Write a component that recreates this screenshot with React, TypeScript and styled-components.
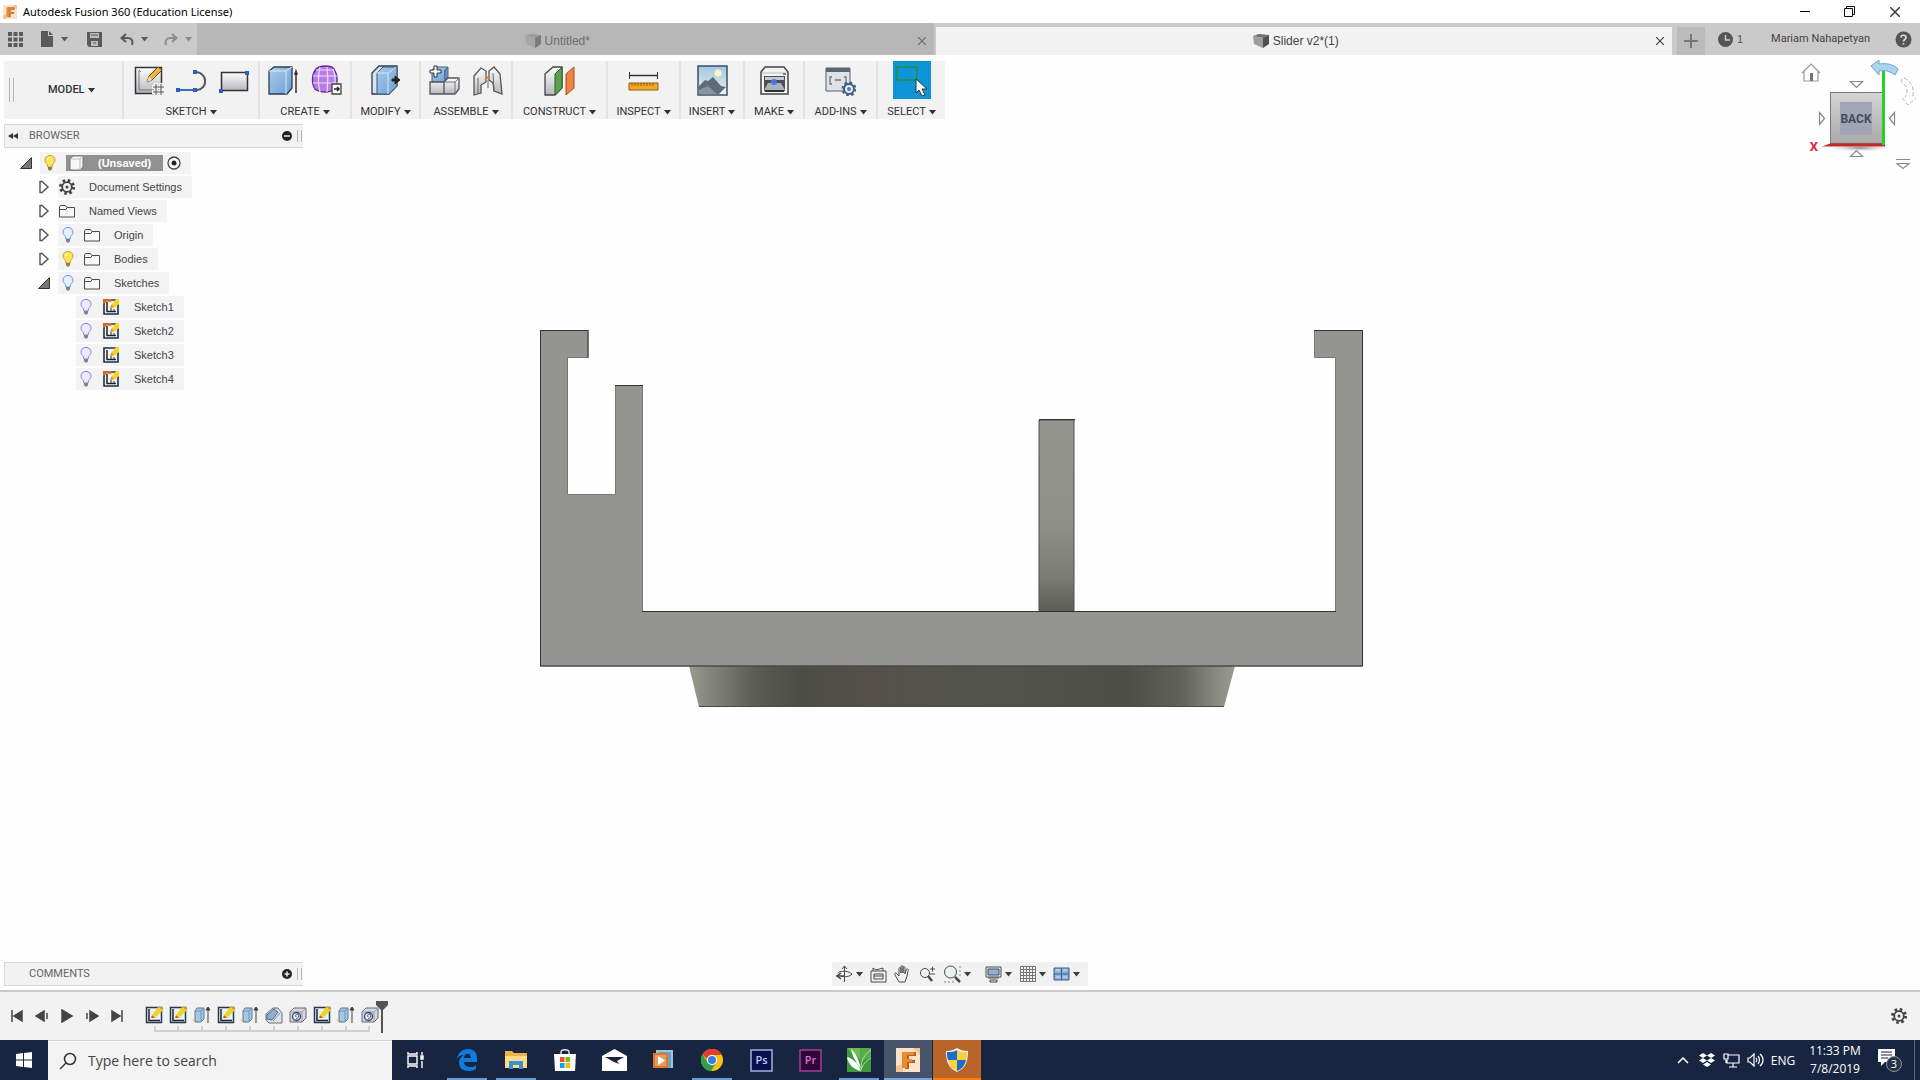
import React from 'react';
import styled, { createGlobalStyle } from 'styled-components';

const GlobalStyle = createGlobalStyle`
  *, *::before, *::after { box-sizing: border-box; }
  body { margin: 0; background: #fff; font-family: "Liberation Sans", Arial, sans-serif; font-size: 11px; color: #3c3c3c; }
  button { border: 0; padding: 0; background: none; font: inherit; color: inherit; }
  svg { display: block; flex: none; }
`;

/* ---------- layout ---------- */

const Window = styled.div`
  display: flex;
  flex-direction: column;
  min-height: 100vh;
`;

const TitleBar = styled.header`
  display: flex;
  align-items: center;
  height: 23px;
  padding: 0 3px;
  background: #fff;
`;

const AppTitle = styled.h1`
  flex: 1;
  margin: 0 0 0 6px;
  font: 400 11px/23px "Noto Sans", "Segoe UI", sans-serif;
  color: #000;
`;

const WindowButton = styled.button`
  display: grid;
  place-items: center;
  width: 45px;
  height: 22px;
`;

const TabBar = styled.div`
  display: flex;
  align-items: stretch;
  height: 32px;
  background: #cacaca;
  color: #555;
`;

const QuickAccess = styled.div`
  display: flex;
  align-items: center;
  width: 197px;
  padding-left: 8px;
  gap: 16px;
`;

const QuickButton = styled.button<{ $w: number; $dim?: boolean; $center?: boolean }>`
  display: flex;
  align-items: center;
  justify-content: ${p => (p.$center ? 'center' : 'space-between')};
  width: ${p => p.$w}px;
  height: 20px;
  color: ${p => (p.$dim ? '#8c8c8c' : '#5a5a5a')};
`;

const Tab = styled.div<{ $active?: boolean }>`
  display: flex;
  flex: 1;
  align-items: center;
  margin-top: ${p => (p.$active ? 4 : 0)}px;
  padding: ${p => (p.$active ? 0 : 4)}px 4px 0 4px;
  border-right: 2px solid #cacaca;
  background: ${p => (p.$active ? '#f2f2f2' : '#b7b7b7')};
  color: ${p => (p.$active ? '#444' : '#6c6c6c')};
`;

const TabName = styled.button`
  display: flex;
  flex: 1;
  align-items: center;
  justify-content: center;
  gap: 4px;
  font-size: 12px;
  line-height: 20px;
`;

const TabClose = styled.button`
  display: grid;
  place-items: center;
  width: 16px;
  height: 20px;
`;

const Account = styled.div`
  display: flex;
  align-items: center;
  width: 246px;
  padding: 0 8px 0 3px;
`;

const NewTab = styled.button`
  display: grid;
  place-items: center;
  align-self: stretch;
  width: 28px;
  margin: 4px 13px 0 0;
  background: #bbb;
`;

const JobCount = styled.button`
  display: flex;
  align-items: center;
  gap: 4px;
`;

const UserName = styled.button`
  flex: 1;
  padding-left: 4px;
  font: 400 11px/20px Roboto, sans-serif;
  color: #444;
`;

const Workspace = styled.main`
  position: relative;
  display: flex;
  flex: 1;
  flex-direction: column;
  align-items: flex-start;
  padding: 6px 4px 4px;
  background: #fefefe;
  border-bottom: 2px solid #c9c9c9;
`;

const Stage = styled.div`
  position: absolute;
  inset: 0;
  display: grid;
  place-items: center;
  padding: 0 16px 8px 0;
`;

const CubeHolder = styled.div`
  position: absolute;
  top: 1px;
  right: 0;
`;

const Ribbon = styled.div`
  position: relative;
  display: flex;
  height: 58px;
  margin-bottom: 5px;
  background: #f2f2f2;
`;

const Group = styled.section<{ $w: number }>`
  display: flex;
  flex-direction: column;
  align-items: center;
  width: ${p => p.$w}px;
  gap: 6px;
  border-left: 2px solid #e2e2e2;
`;

const ToolRow = styled.div`
  display: flex;
  align-items: center;
  height: 38px;
  gap: 12px;
`;

const Tool = styled.button<{ $on?: boolean }>`
  display: grid;
  place-items: center;
  width: ${p => (p.$on ? 38 : 31)}px;
  height: 38px;
  background: ${p => (p.$on ? '#0c96d8' : 'transparent')};
`;

const MenuButton = styled.button<{ $strong?: boolean }>`
  display: flex;
  align-items: center;
  gap: 3px;
  font: ${p => (p.$strong ? 500 : 400)} 11px/14px Roboto, sans-serif;
  color: #333;
`;

const Mode = styled.div`
  display: flex;
  align-items: center;
  width: 118px;
  gap: 34px;
  padding-left: 5px;
`;

const Grip = styled.span<{ $h: number }>`
  width: 5px;
  height: ${p => p.$h}px;
  border: solid #b4b4b4;
  border-width: 0 1px;
`;

const PanelBar = styled.div`
  position: relative;
  display: flex;
  align-items: center;
  width: 299px;
  height: 24px;
  padding: 0 1px;
  gap: 3px;
  background: #f2f2f2;
  border: solid #d6d6d6;
  border-width: 1px 0 1px 1px;
`;

const PanelTitle = styled.h2`
  flex: 1;
  margin: 0;
  padding-left: 6px;
  font: 400 11px/20px Roboto, sans-serif;
  color: #666;
`;

const IconSlot = styled.button<{ $w?: number }>`
  display: grid;
  place-items: center;
  width: ${p => p.$w ?? 14}px;
  height: 20px;
`;

const Tree = styled.ul`
  position: relative;
  margin: 3px 0 0;
  padding: 0;
  list-style: none;
`;

const TreeRow = styled.li<{ $indent: number }>`
  display: flex;
  align-items: center;
  height: 24px;
  gap: 8px;
  padding-left: ${p => p.$indent}px;
`;

const Pill = styled.div<{ $gap: number }>`
  display: flex;
  align-items: center;
  height: 22px;
  gap: ${p => p.$gap}px;
  padding: 0 10px 0 1px;
  background: #f3f3f3;
`;

const NodeName = styled.button`
  margin-left: 7px;
  font-size: 11px;
  line-height: 22px;
  color: #444;
`;

const RootName = styled.button`
  display: flex;
  align-items: center;
  width: 97px;
  height: 16px;
  margin: 0 1px 0 4px;
  padding-left: 3px;
  gap: 14px;
  background: #919191;
  color: #fff;
  font-size: 11px;
  font-weight: 700;
`;

const Bottom = styled.div`
  position: relative;
  display: grid;
  grid-template-columns: 1fr auto 1fr;
  width: 100%;
  margin-top: auto;
`;

const NavBar = styled.div`
  display: flex;
  align-items: center;
  gap: 7px;
  height: 24px;
  padding: 0 8px 0 4px;
  background: #f1f1f1;
`;

const NavButton = styled.button<{ $apart?: boolean }>`
  display: flex;
  align-items: center;
  gap: 3px;
  height: 22px;
  margin-left: ${p => (p.$apart ? 7 : 0)}px;
`;

const Timeline = styled.section`
  display: flex;
  align-items: center;
  height: 48px;
  padding: 0 12px 0 4px;
  background: #f2f2f2;
`;

const Playback = styled.div`
  display: flex;
  width: 138px;
`;

const History = styled.div`
  display: flex;
  flex: 1;
  align-items: flex-start;
  height: 31px;
  margin-top: 1px;
`;

const Features = styled.ol`
  display: flex;
  margin: 0;
  padding: 0;
  list-style: none;
`;

const Feature = styled.li`
  display: flex;
  flex-direction: column;
  align-items: center;
  width: 24px;
  padding-top: 5px;
  gap: 2px;
`;

const Track = styled.span<{ $edge?: 'first' | 'last' }>`
  width: ${p => (p.$edge ? 12 : 24)}px;
  height: 6px;
  align-self: ${p => (p.$edge === 'first' ? 'flex-end' : 'flex-start')};
  border-bottom: 2px solid #cfcfcf;
  background: linear-gradient(#cfcfcf, #cfcfcf) no-repeat
    ${p => (p.$edge === 'first' ? 'left' : p.$edge === 'last' ? 'right' : 'center')} / 2px 100%;
`;

const Marker = styled.span`
  display: block;
  margin-left: -6px;
`;

const TaskBar = styled.footer`
  display: flex;
  align-items: center;
  height: 40px;
  background: #182540;
  color: #fff;
  font-family: "Open Sans", "Segoe UI", sans-serif;
`;

const TaskButton = styled.button<{ $tone?: string; $line?: string; $wide?: boolean }>`
  display: grid;
  place-items: center;
  width: 48px;
  height: 40px;
  margin-right: ${p => (p.$wide ? 3 : 1)}px;
  background: ${p => p.$tone ?? 'transparent'};
  background-image: ${p => (p.$line ? `linear-gradient(${p.$line}, ${p.$line})` : 'none')};
  background-repeat: no-repeat;
  background-position: bottom center;
  background-size: ${p => (p.$tone ? 48 : 40)}px 2px;
`;

const Start = styled.button`
  display: grid;
  place-items: center;
  width: 48px;
  height: 40px;
`;

const Search = styled.label`
  display: flex;
  align-items: center;
  width: 344px;
  height: 40px;
  gap: 11px;
  padding: 0 11px;
  background: #f3f3f3;
  border-top: 1px solid #d2d2d2;
`;

const SearchInput = styled.input`
  flex: 1;
  min-width: 0;
  border: 0;
  padding: 0;
  outline: 0;
  background: none;
  font: 400 14px/20px "Open Sans", "Segoe UI", sans-serif;
  &::placeholder { color: #444; opacity: 1; }
`;

const Tray = styled.div`
  display: flex;
  align-items: center;
  margin-left: auto;
  font-size: 12px;
`;

const TrayButton = styled.button`
  display: grid;
  place-items: center;
  width: 24px;
  height: 40px;
`;

const Language = styled.button`
  width: 32px;
`;

const Clock = styled.time`
  width: 72px;
  margin-right: 6px;
  text-align: center;
  line-height: 18px;
  white-space: pre-line;
`;

const Peek = styled.span`
  width: 6px;
  height: 40px;
  margin-left: 13px;
  border-left: 1px solid #5b667b;
`;

/* ---------- small glyphs ---------- */

const Caret = () => (
  <svg width="7" height="5" viewBox="0 0 7 5" fill="currentColor"><path d="M0 0h7L3.500 4.500z" /></svg>
);

const Cross = ({ size = 8 }: { size?: number }) => (
  <svg width={size} height={size} viewBox="0 0 10 10" fill="none" stroke="currentColor" strokeWidth="1.500"><path d="M0 0l10 10M10 0L0 10" /></svg>
);

const FusionMark = ({ size }: { size: number }) => (
  <svg width={size} height={size} viewBox="0 0 24 24">
    <path fill="#fbe3cb" d="M0 0h24v24H0z" />
    <path fill="#f4c394" d="M0 18l7-2v8H0zM17 0h7v7z" />
    <path fill="#b5651d" d="M9 4h11v4h-7v4h6v3h-6v6H9z" />
    <path fill="#e88b32" d="M6 4h12v3h-7v4h5v3h-5v6H6z" />
  </svg>
);

const Cube = ({ dim }: { dim?: boolean }) => (
  <svg width="16" height="16" viewBox="0 0 16 16">
    <path fill={dim ? '#9a9a9a' : '#6f6f6f'} d="M0 3l6-2 10 1-6 3z" />
    <path fill={dim ? '#a6a6a6' : '#9d9d9d'} d="M0 3l10 2v10L1 11z" />
    <path fill={dim ? '#7b7b7b' : '#505050'} d="M10 5l6-3v9l-6 4z" />
  </svg>
);

const Gear = () => (
  <svg width="16" height="16" viewBox="0 0 16 16" fill="none" stroke="#444">
    <circle cx="8" cy="8" r="6.500" strokeWidth="3" strokeDasharray="2.500 2.600" />
    <circle cx="8" cy="8" r="4.800" strokeWidth="1.800" />
    <circle cx="8" cy="8" r="1.500" fill="#444" stroke="none" />
  </svg>
);

const Bulb = ({ on, violet }: { on?: boolean; violet?: boolean }) => (
  <svg width="18" height="16" viewBox="0 0 18 16">
    <path d="M9 .5C6 .5 4 2.500 4 5.200c0 2 1.500 3 2.300 4.300.4.700.4 1.500.4 2.500h4.600c0-1 0-1.800.4-2.500C12.500 8.200 14 7.200 14 5.200 14 2.500 12 .5 9 .5z" fill={on ? '#f9e45c' : violet ? '#eceaff' : '#e3f0fc'} stroke={on ? '#c9a51d' : violet ? '#8584cb' : '#6f9cc8'} />
    <path d="M7 12h4v2l-1 1.500H8L7 14z" fill={on ? '#8a7a52' : '#77819a'} />
    <path d="M6.500 4.500c0-1 1-2 2-2" stroke="#fff" fill="none" />
  </svg>
);

const Folder = () => (
  <svg width="16" height="14" viewBox="0 0 16 14" fill="none" stroke="#4a4a4a">
    <path d="M.5 13V3l1-1.500h5L8 3.500h7.500V13z" fill="#f7f7f7" /><path d="M.5 5.500H7l1-2" />
  </svg>
);

const Expander = ({ open }: { open?: boolean }) => open ? (
  <svg width="12" height="12" viewBox="0 0 12 12"><path d="M11.500.5v11H.5z" fill="#777" stroke="#333" /></svg>
) : (
  <svg width="12" height="14" viewBox="0 0 12 14"><path d="M2 1.500v11h2l6-5.500-6-5.500z" fill="#fff" stroke="#555" strokeWidth="1.400" /></svg>
);

const SketchNode = ({ red = true }: { red?: boolean }) => (
  <svg width="16" height="16" viewBox="0 0 16 16">
    <path d="M1 1h14v14H1z" fill="#f4f6fa" stroke="#1c2c48" strokeWidth="1.600" />
    <path d="M4 3v9.500h9" fill="none" stroke="#222" strokeWidth="1.500" />
    <path d="M7 9l2-4 4-5h3v5l-5 4z" fill="#f6d22c" />
    <path d="M7 9l1.500-3.500L10.500 8z" fill="#c98b4a" />
    {red && <path d="M0 0h10L8 3 4 2.500 0 5z" fill="#cf6a2e" />}
    <path d="M8 9v3M11 10v2" stroke="#333" />
  </svg>
);

const SketchFeature = () => (
  <svg width="18" height="18" viewBox="0 0 18 18">
    <path d="M1.500 1.500h15v15h-15z" fill="#e8f1f8" stroke="#26364d" strokeWidth="1.500" />
    <path d="M4 3v11.500h11" fill="none" stroke="#222" strokeWidth="1.500" />
    <path d="M7 9l6-8h5v3l-8 8z" fill="#f6d22c" /><path d="M6 12l1-3 3 3z" fill="#a9682c" /><path d="M13 1h5v3z" fill="#c9922a" />
  </svg>
);

const ExtrudeFeature = () => (
  <svg width="18" height="18" viewBox="0 0 18 18">
    <path d="M2 5l2-3h7v11l-3 3H2z" fill="#a5c6e6" stroke="#5e7692" /><path d="M2 5h6v11M8 5l3-3" fill="none" stroke="#7593b3" />
    <path d="M15 17V3M13 4l2-3 2 3z" fill="#333" stroke="#444" />
    <circle cx="1" cy="14" r="1" fill="#eeb243" />
  </svg>
);

const FilletFeature = () => (
  <svg width="18" height="18" viewBox="0 0 18 18">
    <path d="M1 8l7-6h5l4 5v10H4l-3-3z" fill="#dde2e7" stroke="#66717d" /><path d="M2 9l7-6 4 3-6 8-5-1z" fill="#93b0ce" stroke="#4e6887" /><path d="M8 15l7-8" stroke="#7d8b9a" />
  </svg>
);

const HoleFeature = () => (
  <svg width="18" height="18" viewBox="0 0 18 18">
    <path d="M1 6l4-4h12v10l-4 4H1z" fill="#d3d9de" stroke="#667" /><path d="M13 16V6l4-4M13 6H1" fill="none" stroke="#99a" />
    <circle cx="7.500" cy="10.500" r="4" fill="#eef3f9" stroke="#3b4c66" strokeWidth="1.400" /><path d="M7 13c3-1 3-3 2-5-2 0-3 1-2 3" fill="none" stroke="#3b4c66" />
  </svg>
);

/* ---------- ribbon icons ---------- */

const Big = ({ children, label }: { children: React.ReactNode; label: string }) => (
  <svg width="31" height="31" viewBox="0 0 31 31" aria-label={label} role="img">{children}</svg>
);

const HiddenSvg = styled.svg`
  position: absolute;
`;

const Defs = () => (
  <HiddenSvg width="0" height="0" aria-hidden="true">
    <defs>
      <linearGradient id="steel" x2="0" y2="1"><stop stopColor="#fff" /><stop offset="1" stopColor="#b4b7bc" /></linearGradient>
      <linearGradient id="blue" x2="1" y2="1"><stop stopColor="#a9cdee" /><stop offset="1" stopColor="#6c9ed0" /></linearGradient>
      <linearGradient id="sky" x2="0" y2="1"><stop stopColor="#9cc8e6" /><stop offset="1" stopColor="#f3f1df" /></linearGradient>
    </defs>
  </HiddenSvg>
);

const icons: Record<string, React.ReactNode> = {
  'Create Sketch': <>
    <path d="M2.500 2.500h26v26h-26z" fill="url(#steel)" stroke="#333" strokeWidth="1.500" />
    <path d="M6 5v20h20M6 5l2 2" fill="none" stroke="#777" /><path d="M14 17l2-6L25 2l4 3-10 10z" fill="#f1b43a" stroke="#6d4d1a" /><path d="M14 17l2-6 3 4z" fill="#f6ddb3" />
    <path d="M19 22h12M19 27h12M23 18v12M28 18v12" stroke="#f2f2f2" strokeWidth="4" /><path d="M20 22h11M20 27h11M23 19v11M28 19v11" stroke="#555" />
  </>,
  Line: <>
    <path d="M2 25h19c11-1 11-17-1-18" fill="none" stroke="#555" strokeWidth="2" /><path d="M2 25h18" stroke="#3b6fc4" strokeWidth="2" />
    <path d="M0 23h4v4H0zM17 23h4v4h-4zM17 5h4v4h-4z" fill="#2a5fc0" />
  </>,
  Rectangle: <>
    <path d="M2.500 7.500h26v18h-26z" fill="url(#steel)" stroke="#333" strokeWidth="1.500" /><path d="M0 24h4v4H0zM26 6h4v4h-4z" fill="#2a5fc0" />
  </>,
  Extrude: <>
    <path d="M1 6l5-4h18v21l-5 6H1z" fill="url(#blue)" stroke="#2b3d52" strokeWidth="1.300" /><path d="M1 6h17v23M18 6l6-4" fill="none" stroke="#dcecfa" />
    <path d="M28 28V8M27 9l1-3 1 3z" stroke="#333" strokeWidth="1.500" />
  </>,
  'Create Form': <>
    <path d="M5 4C9 0 20 0 23 4c4 6 4 14 1 20-5 4-15 4-20 0C0 18 1 9 5 4z" fill="#b67de6" stroke="#5e2896" strokeWidth="1.300" />
    <path d="M2 11h24M2 18h24M9 2c-2 8-2 17 0 25M16 2c1 8 1 17 0 25M5 5h18M22 4c3 8 3 14 0 20" fill="none" stroke="#efdcff" strokeWidth="1.200" />
    <path d="M21 19h9v10h-9z" fill="#fff" stroke="#444" strokeWidth="1.300" /><path d="M23 24h5m-2-2l2 2-2 2" fill="none" stroke="#222" strokeWidth="1.500" />
  </>,
  'Press Pull': <>
    <path d="M2 8l7-7h18v20l-8 8H2z" fill="#dde3ea" stroke="#2b3d52" strokeWidth="1.300" /><path d="M7 8l6-6h14v19l-8 8H7z" fill="url(#blue)" stroke="#3c5b7c" /><path d="M7 8h11v21M18 8l8-6" fill="none" stroke="#d8e9f8" />
    <path d="M22 14h3v-3l5 4-5 4v-3h-3z" fill="#222" stroke="#222" />
  </>,
  'New Component': <>
    <path d="M3 5l3-3h13l-3 3v12H3z" fill="url(#blue)" stroke="#46648a" /><path d="M16 5l3-3v11l-3 4z" fill="#6b93bf" stroke="#46648a" /><path d="M1 17h14v12H1zM15 17l4-4h11v11l-4 5H15z" fill="url(#steel)" stroke="#555" strokeWidth="1.300" /><path d="M15 17h11v12M26 17l4-4" fill="none" stroke="#777" />
    <path d="M5 1h3v4h4v3H8v4H5V8H1V5h4z" fill="#fff" stroke="#333" />
  </>,
  Joint: <>
    <path d="M2 11l7-8 5 3v11l-5 3v8l-7 2z" fill="url(#steel)" stroke="#555" strokeWidth="1.300" /><path d="M17 6l5-4 6 7 2 20-8-3-1-8-4-3z" fill="url(#steel)" stroke="#555" strokeWidth="1.300" /><path d="M6 13v15M21 8l1 18M16 15v8" fill="none" stroke="#666" /><path d="M13 15l3-3" stroke="#e07b39" strokeWidth="2" />
  </>,
  'Offset Plane': <>
    <path d="M1 9l8-7h9v21l-7 7H1z" fill="url(#steel)" stroke="#444" strokeWidth="1.300" /><path d="M11 9l7-7v21l-7 7z" fill="#5fa04f" stroke="#2c5a25" /><path d="M22 9l8-7v21l-8 7z" fill="#f08243" stroke="#a44c1c" />
  </>,
  Measure: <>
    <path d="M1 10.500h29" stroke="#333" strokeWidth="1.500" /><path d="M1.500 7v7M29.500 7v7" stroke="#333" /><path d="M1 18h29v7H1z" fill="#f2a828" stroke="#8f610f" /><path d="M4 18v3M7 18v3M10 18v3M13 18v3M16 18v3M19 18v3M22 18v3M25 18v3" stroke="#8f610f" />
  </>,
  'Attach Canvas': <>
    <path d="M1 1h29v29H1z" fill="url(#sky)" stroke="#3a5068" strokeWidth="1.500" /><circle cx="21" cy="8" r="3.500" fill="#fff4bd" /><path d="M2 21l6-6 3 1 5-4 8 9 5 1v7H2z" fill="#5f6c7b" /><path d="M2 25l9-4 9 8H2z" fill="#8794a2" /><path d="M22 29l7-7v7z" fill="#eef2f5" />
  </>,
  '3D Print': <>
    <path d="M2 7l4-5h19l4 5v22H2z" fill="#f3f3f3" stroke="#444" strokeWidth="1.500" /><path d="M3 8h25" stroke="#bbb" /><path d="M5 11h21v15H5z" fill="#4a4f57" /><path d="M6 12h19v3H6z" fill="#c3cad3" /><path d="M5 25h21l-4-7H9z" fill="#aab2bd" /><circle cx="15" cy="17" r="3" fill="#4a77d6" /><path d="M24 9h3" stroke="#5aa63c" strokeWidth="2" /><path d="M6 26h19" stroke="#333" strokeWidth="2" />
  </>,
  'Scripts and Add-Ins': <>
    <path d="M1 3h24v23H1z" fill="#dfe3e8" stroke="#53606f" /><path d="M1 3h24v4H1z" fill="#5d6773" /><path d="M7 12H5v7h2M19 12h2v7h-2M10 15h6" fill="none" stroke="#6d7783" strokeWidth="1.300" />
    <circle cx="24" cy="24" r="5" fill="#e4ecf6" stroke="#3f5c85" strokeWidth="2" /><circle cx="24" cy="24" r="6.500" fill="none" stroke="#3f5c85" strokeWidth="2" strokeDasharray="2.500 2.600" /><circle cx="24" cy="24" r="2" fill="#5a7cab" />
  </>,
  Select: <>
    <path d="M1 2h20v13H1z" fill="none" stroke="#2e8b3d" strokeWidth="1.500" /><path d="M20 14v14l3-3 3 6 3-1-3-6h5z" fill="#fff" stroke="#333" />
  </>,
};

const groups = [
  { name: 'SKETCH', w: 136, tools: ['Create Sketch', 'Line', 'Rectangle'] },
  { name: 'CREATE', w: 92, tools: ['Extrude', 'Create Form'] },
  { name: 'MODIFY', w: 69, tools: ['Press Pull'] },
  { name: 'ASSEMBLE', w: 92, tools: ['New Component', 'Joint'] },
  { name: 'CONSTRUCT', w: 95, tools: ['Offset Plane'] },
  { name: 'INSPECT', w: 73, tools: ['Measure'] },
  { name: 'INSERT', w: 64, tools: ['Attach Canvas'] },
  { name: 'MAKE', w: 60, tools: ['3D Print'] },
  { name: 'ADD-INS', w: 73, tools: ['Scripts and Add-Ins'] },
  { name: 'SELECT', w: 69, tools: ['Select'] },
];

/* ---------- model and view cube ---------- */

const Model = () => (
  <svg width="824" height="378" viewBox="0 0 824 378" role="img" aria-label="Slider body, back view">
    <defs>
      <linearGradient id="post" x2="0" y2="1"><stop stopColor="#94958f" /><stop offset=".55" stopColor="#8e8f88" /><stop offset=".82" stopColor="#7b7c75" /><stop offset="1" stopColor="#5b5c55" /></linearGradient>
      <linearGradient id="foot"><stop stopColor="#989a8e" /><stop offset=".05" stopColor="#7f8076" /><stop offset=".12" stopColor="#5b5c54" /><stop offset=".2" stopColor="#4c4d46" /><stop offset=".34" stopColor="#544f4a" /><stop offset=".5" stopColor="#53544d" /><stop offset=".8" stopColor="#4d4e47" /><stop offset=".9" stopColor="#606159" /><stop offset=".96" stopColor="#85877c" /><stop offset="1" stopColor="#9a9b91" /></linearGradient>
    </defs>
    <path d="M149 336h546l-11 41H159z" fill="url(#foot)" />
    <path d="M159 376.500h525" stroke="#4a4a46" />
    <path d="M499 90h35v192h-35z" fill="url(#post)" stroke="#4e4e4b" />
    <path d="M.5.500h47.500v27H27.500v137H75.500V55.500h27V281.500H795.500V27.500H774.500V.5H822.500V336H.5z" fill="#949590" stroke="#777" />
    <path d="M0 .5h48M774 .5h49M75 55.500h28M499 89.500h36M102 281.500h694M0 336h823M48 0v28M.5 0v336M822.500 0v336" stroke="#333" fill="none" />
  </svg>
);

const ViewCube = () => (
  <svg width="120" height="118" viewBox="0 0 120 118" role="img" aria-label="View cube">
    <defs>
      <linearGradient id="face" x2="0" y2="1"><stop stopColor="#d6d6d6" /><stop offset="1" stopColor="#a9a9a9" /></linearGradient>
      <radialGradient id="shade"><stop stopColor="#888" /><stop offset="1" stopColor="#fff" stopOpacity="0" /></radialGradient>
    </defs>
    <ellipse cx="60" cy="92" rx="36" ry="4" fill="url(#shade)" />
    <path d="M2 17l9-9 9 9M4 15v10h14V15" fill="none" stroke="#999" strokeWidth="1.200" /><path d="M10 17h3v8h-3z" fill="#777" />
    <path d="M30.500 36.500h52v51h-52z" fill="url(#face)" stroke="#777" />
    <path d="M40 46h32v33H40z" fill="#a1a6b4" />
    <text x="56" y="67" textAnchor="middle" fontFamily="Roboto, sans-serif" fontWeight="700" fontSize="12" fill="#454b5c">BACK</text>
    <path d="M22 90.500h63v-3H30z" fill="#c42a2a" /><path d="M83.500 15v74" stroke="#22d422" strokeWidth="3" />
    <text x="14" y="95" textAnchor="middle" fontFamily="Roboto, sans-serif" fontWeight="700" fontSize="13" fill="#e8203c">X</text>
    <path d="M71 10l8-6v4c7-1 14 0 19 5l-3 6c-5-4-10-5-16-4v4z" fill="#a9d3ef" stroke="#6ba6cf" />
    <path d="M102 23c-3 3 4 5 5 10 0 4 0 5-2 8M104 22c8 4 10 10 9 19M102 42l6 7 8-7" fill="none" stroke="#b5b5b5" strokeDasharray="4 2" />
    <g fill="#fff" stroke="#888" strokeWidth="1.200">
      <path d="M50.500 25.500h12l-6 6z" /><path d="M50.500 100.500h12l-6-6z" /><path d="M19.500 56.500v12l5-6z" /><path d="M94.500 56.500v12l-5-6z" />
      <path d="M96 103.500h14M97 107.500h12l-6 5z" />
    </g>
  </svg>
);

/* ---------- nav bar ---------- */

const navItems: { label: string; menu?: boolean; apart?: boolean; w: number; art: React.ReactNode }[] = [
  { label: 'Orbit', menu: true, w: 17, art: <><path d="M8.500 1v16M6 4l2.500-3L11 4M2 8c3-3 11-2 14 1-2 3-8 3-11 2" /><path d="M0 11h9M5 8l-4 3 4 3" strokeWidth="1.500" /></> },
  { label: 'Look At', w: 17, art: <><path d="M1 6h15v11H1zM3 6V3l3 2 7-2v3M4 9h9v5H4z" /><path d="M4 11h9" /></> },
  { label: 'Pan', w: 17, art: <path d="M5 17L1 10c-1-2 1-3 2-1l2 2V4c0-2 2-2 2 0v4-6c0-2 2-2 2 0v6-5c0-2 2-2 2 0v6l1-4c1-2 3-1 2 1l-1 5-2 6z" /> },
  { label: 'Zoom', w: 18, art: <><circle cx="7" cy="8" r="4.500" /><path d="M10 11l4 5" strokeWidth="2.500" /><path d="M12 4h5M14.500 1.500v5M12 9h5" /></> },
  { label: 'Zoom Window', menu: true, w: 18, art: <><circle cx="7.500" cy="7" r="6" fill="#e9f1ed" /><path d="M12 12l5 5" strokeWidth="2.500" /><path d="M1 17h10M17 1v10" strokeDasharray="2 2" stroke="#888" /></> },
  { label: 'Display Settings', menu: true, apart: true, w: 17, art: <><path d="M1 2h15v10H1z" fill="#e8edf4" /><path d="M3 4h11v6H3z" fill="#8eb1de" /><path d="M5 15h7v2H5zM3 13h11" /></> },
  { label: 'Grid and Snaps', menu: true, w: 17, art: <path d="M1.500 1.500h15v15h-15zM4.500 1v15M7.500 1v15M10.500 1v15M13.500 1v15M1 4.500h15M1 7.500h15M1 10.500h15M1 13.500h15" stroke="#777" /> },
  { label: 'Viewports', menu: true, w: 17, art: <><path d="M1 3h15v12H1z" fill="#8eb1de" stroke="#3e598a" /><path d="M8.500 3v12M1 9h15" stroke="#3e598a" /><path d="M3 5h4M10 5h4M3 12h4M10 12h4" stroke="#d3e3f5" /></> },
];

/* ---------- task bar ---------- */

const Tile = ({ fg, bg, edge, text }: { fg: string; bg: string; edge: string; text: string }) => (
  <svg width="23" height="23" viewBox="0 0 23 23"><path d="M1 1h21v21H1z" fill={bg} stroke={edge} strokeWidth="1.500" /><text x="11.500" y="15" textAnchor="middle" fontFamily="Open Sans, sans-serif" fontWeight="600" fontSize="11" fill={fg}>{text}</text></svg>
);

const blueLine = '#6c9dd2';

const tasks: { name: string; tone?: string; line?: string; wide?: boolean; art: React.ReactNode }[] = [
  { name: 'Task View', wide: true, art: <svg width="18" height="18" viewBox="0 0 18 18" fill="none" stroke="#fff" strokeWidth="1.400"><path d="M1 5h9v8H1zM1 1v2h9V1M1 17v-2h9v2M15 1v3M15 10v7" /><path d="M14 5h2v3h-2z" fill="#fff" /></svg> },
  { name: 'Edge', line: blueLine, art: <svg width="22" height="22" viewBox="0 0 22 22"><path d="M1 10C2 4 6 0 12 0c6 0 9 4 9 9v4H8c0 3 3 5 6 5 2 0 4 0 6-2v4c-2 1-4 2-7 2C7 22 3 19 3 14c0-4 2-6 5-8-4 0-6 2-7 4zm7-1h7c0-6-7-5-7 0z" fill="#0f7bdc" /></svg> },
  { name: 'File Explorer', line: blueLine, art: <svg width="24" height="22" viewBox="0 0 24 22"><path d="M1 2h7l2 2h13v15H1z" fill="#e9b44a" /><path d="M1 7h22v12H1z" fill="#fbdc83" /><path d="M5 12h14v8h-4v-4H9v4H5z" fill="#3d8fd6" /></svg> },
  { name: 'Store', art: <svg width="24" height="24" viewBox="0 0 24 24"><path d="M8 7V4c0-3 8-3 8 0v3" fill="none" stroke="#ddd" strokeWidth="1.500" /><path d="M1 6h22l-1 17H2z" fill="#fff" /><path d="M7 9h4.500v5H7z" fill="#f25022" /><path d="M12.500 9H17v5h-4.500z" fill="#7fba00" /><path d="M7 15h4.500v5H7z" fill="#00a4ef" /><path d="M12.500 15H17v5h-4.500z" fill="#ffb900" /></svg> },
  { name: 'Mail', art: <svg width="25" height="22" viewBox="0 0 25 22"><path d="M0 7l12.500-7L25 7v15H0z" fill="#fff" /><path d="M3 8h19l-7 4 2 3-5-2z" fill="#182540" /></svg> },
  { name: 'Movies', art: <svg width="20" height="20" viewBox="0 0 20 20"><path d="M3 0h17v18H3z" fill="#9fc4de" /><path d="M5 2h13v16H5z" fill="#6da1c4" /><path d="M0 3h15v15H0z" fill="#dc7930" /><path d="M2 5h11v11H2z" fill="#e99c5a" /><path d="M5 6v9l7-4.500z" fill="#fff" /></svg> },
  { name: 'Chrome', line: blueLine, art: <svg width="22" height="22" viewBox="0 0 22 22"><circle cx="11" cy="11" r="11" fill="#fbc116" /><path d="M11 0a11 11 0 0 1 10 6H11a5 5 0 0 0-5 4L1.500 5.500A11 11 0 0 1 11 0z" fill="#e33b2e" /><path d="M1.500 5.500A11 11 0 0 0 10 22l4.500-7A5 5 0 0 1 6.500 13z" fill="#2da24c" /><circle cx="11" cy="11" r="5" fill="#fff" /><circle cx="11" cy="11" r="4" fill="#3b78e7" /></svg> },
  { name: 'Photoshop', art: <Tile text="Ps" fg="#b9cdf2" bg="#0a0f50" edge="#9eb3dc" /> },
  { name: 'Premiere', art: <Tile text="Pr" fg="#df6fd5" bg="#2d0836" edge="#a33e9d" /> },
  { name: 'CorelDRAW', line: blueLine, art: <svg width="24" height="24" viewBox="0 0 24 24"><path d="M0 0h24v24H0z" fill="#3c9a3b" /><path d="M0 0h13l1 12z" fill="#6abb55" /><path d="M13 0h11v9L14 13z" fill="#55ad48" /><path d="M0 9c5 1 11 6 14 14C8 22 1 17 0 9zM4 1c5 4 8 11 10 20C9 14 5 8 4 1z" fill="#fff" /><path d="M14 20C14 12 18 6 24 2M14 22c2-6 5-9 10-12" stroke="#b5deb0" fill="none" /></svg> },
  { name: 'Fusion 360', tone: '#475369', line: '#7aa7d8', art: <FusionMark size={24} /> },
  { name: 'Security prompt', tone: '#b9652a', line: '#ff7c10', art: <svg width="22" height="24" viewBox="0 0 22 24"><path d="M11 0c3 2 6 3 11 3 0 10-2 17-11 21C2 20 0 13 0 3c5 0 8-1 11-3z" fill="#eef3f8" /><path d="M11 2v10H2C1 9 1 7 1 4c4 0 7 0 10-2z" fill="#1b6fc2" /><path d="M11 2c3 2 6 2 10 2 0 3 0 5-1 8h-9z" fill="#fbd043" /><path d="M11 12v11C6 21 3 17 2 12z" fill="#fbd043" /><path d="M11 12h9c-1 5-4 9-9 11z" fill="#1b6fc2" /></svg> },
];

/* ---------- screen ---------- */

const folderRows = [
  { name: 'Origin', on: false }, { name: 'Bodies', on: true }, { name: 'Sketches', on: false, open: true },
];
const features = ['s', 's', 'e', 's', 'e', 'f', 'h', 's', 'e', 'h'];
const featureArt: Record<string, React.ReactNode> = { s: <SketchFeature />, e: <ExtrudeFeature />, f: <FilletFeature />, h: <HoleFeature /> };
const playback = [
  ['Go to start', 'M2 1v12M12 2v10L4 7z'], ['Step back', 'M9 2v10L1 7zM12 4v6'], ['Play', 'M2 1v12l10-6z'],
  ['Step forward', 'M5 2v10l8-5zM2 4v6'], ['Go to end', 'M12 1v12M2 2v10l8-5z'],
];
const dots = [0, 5.5, 11];

export default function App() {
  return (
    <Window>
      <GlobalStyle />
      <Defs />
      <TitleBar>
        <FusionMark size={14} />
        <AppTitle>Autodesk Fusion 360 (Education License)</AppTitle>
        <WindowButton aria-label="Minimize"><svg width="10" height="2"><path d="M0 0h10v1H0z" /></svg></WindowButton>
        <WindowButton aria-label="Restore"><svg width="11" height="11" viewBox="0 0 11 11" fill="none" stroke="#111"><path d="M.5 2.500h8v8h-8zM2.500 2.500v-2h8v8h-2" /></svg></WindowButton>
        <WindowButton aria-label="Close"><Cross size={10} /></WindowButton>
      </TitleBar>

      <TabBar>
        <QuickAccess>
          <QuickButton aria-label="Data panel" $w={16}><svg width="15" height="15" viewBox="0 0 15 15" fill="currentColor">{dots.map(y => dots.map(x => <rect key={`${x}-${y}`} x={x} y={y} width="4" height="4" />))}</svg></QuickButton>
          <QuickButton aria-label="File" $w={28}><svg width="14" height="16" viewBox="0 0 14 16" fill="currentColor"><path d="M1 0h7v5h5v11H1z" /><path d="M9 0l4 4H9z" /></svg><Caret /></QuickButton>
          <QuickButton aria-label="Save" $w={20} $center><svg width="15" height="15" viewBox="0 0 15 15"><path d="M0 0h15v15H2l-2-2z" fill="currentColor" /><path d="M3 1h9v5H3zM4 9h7v5H4z" fill="#bdbdbd" /><path d="M4 3h7M6 11h3" stroke="#555" /></svg></QuickButton>
          <QuickButton aria-label="Undo" $w={28}><svg width="14" height="13" viewBox="0 0 14 13" fill="none" stroke="currentColor" strokeWidth="2"><path d="M6 1L1.500 5 6 9M2 5h6c4 0 5 3 4 7" /></svg><Caret /></QuickButton>
          <QuickButton aria-label="Redo" $w={28} $dim><svg width="14" height="13" viewBox="0 0 14 13" fill="none" stroke="currentColor" strokeWidth="2"><path d="M8 1l4.500 4L8 9M12 5H6C2 5 1 8 2 12" /></svg><Caret /></QuickButton>
        </QuickAccess>
        <Tab>
          <TabName><Cube dim />Untitled*</TabName>
          <TabClose aria-label="Close Untitled"><Cross /></TabClose>
        </Tab>
        <Tab $active>
          <TabName><Cube />Slider v2*(1)</TabName>
          <TabClose aria-label="Close Slider v2"><Cross /></TabClose>
        </Tab>
        <Account>
          <NewTab aria-label="New tab"><svg width="14" height="14" viewBox="0 0 14 14" stroke="#777" strokeWidth="2"><path d="M7 0v14M0 7h14" /></svg></NewTab>
          <JobCount><svg width="15" height="15" viewBox="0 0 15 15"><circle cx="7.500" cy="7.500" r="7.500" fill="#555" /><path d="M7.500 3v5H12" fill="none" stroke="#ccc" strokeWidth="1.500" /></svg>1</JobCount>
          <UserName>Mariam Nahapetyan</UserName>
          <IconSlot aria-label="Help" $w={18}><svg width="17" height="17" viewBox="0 0 17 17"><circle cx="8.500" cy="8.500" r="8" fill="#555" /><path d="M6 6.500c0-3 5-3 5 0 0 2-2.500 2-2.500 4M8.500 12v1.500" fill="none" stroke="#ddd" strokeWidth="1.700" /></svg></IconSlot>
        </Account>
      </TabBar>

      <Workspace>
        <Stage><Model /></Stage>
        <CubeHolder><ViewCube /></CubeHolder>

        <Ribbon>
          <Mode><Grip $h={24} /><MenuButton $strong>MODEL <Caret /></MenuButton></Mode>
          {groups.map(g => (
            <Group key={g.name} $w={g.w}>
              <ToolRow>{g.tools.map(t => <Tool key={t} $on={t === 'Select'}><Big label={t}>{icons[t]}</Big></Tool>)}</ToolRow>
              <MenuButton>{g.name}<Caret /></MenuButton>
            </Group>
          ))}
        </Ribbon>

        <PanelBar>
          <IconSlot aria-label="Collapse browser"><svg width="10" height="6" viewBox="0 0 10 6" fill="#333"><path d="M0 3l5-3v6zM5 3l5-3v6z" /></svg></IconSlot>
          <PanelTitle>BROWSER</PanelTitle>
          <IconSlot aria-label="Hide"><svg width="10" height="10" viewBox="0 0 10 10"><circle cx="5" cy="5" r="5" fill="#222" /><path d="M2 5h6" stroke="#eee" strokeWidth="1.500" /></svg></IconSlot>
          <Grip $h={12} />
        </PanelBar>

        <Tree>
          <TreeRow $indent={16}>
            <Expander open />
            <Pill $gap={3}>
              <Bulb on />
              <RootName><svg width="15" height="16" viewBox="0 0 15 16"><path d="M1 4l3-3h10v11l-3 3H1z" fill="#f7f7f7" stroke="#777" /><path d="M1 4h10v11M11 4l3-3" fill="none" stroke="#bbb" /></svg>(Unsaved)</RootName>
              <svg width="14" height="14" viewBox="0 0 14 14"><circle cx="7" cy="7" r="6" fill="#fff" stroke="#444" strokeWidth="1.300" /><circle cx="7" cy="7" r="2.500" fill="#222" /></svg>
            </Pill>
          </TreeRow>
          <TreeRow $indent={34}><Expander /><Pill $gap={7}><Gear /><NodeName>Document Settings</NodeName></Pill></TreeRow>
          <TreeRow $indent={34}><Expander /><Pill $gap={7}><Folder /><NodeName>Named Views</NodeName></Pill></TreeRow>
          {folderRows.map(r => (
            <TreeRow key={r.name} $indent={34}><Expander open={r.open} /><Pill $gap={7}><Bulb on={r.on} /><Folder /><NodeName>{r.name}</NodeName></Pill></TreeRow>
          ))}
          {[1, 2, 3, 4].map(n => (
            <TreeRow key={n} $indent={72}><Pill $gap={8}><Bulb violet /><SketchNode red={n !== 3} /><NodeName>Sketch{n}</NodeName></Pill></TreeRow>
          ))}
        </Tree>

        <Bottom>
          <PanelBar>
            <IconSlot as="span" />
            <PanelTitle>COMMENTS</PanelTitle>
            <IconSlot aria-label="Add comment"><svg width="10" height="10" viewBox="0 0 10 10"><circle cx="5" cy="5" r="5" fill="#222" /><path d="M2.500 5h5M5 2.500v5" stroke="#eee" strokeWidth="1.500" /></svg></IconSlot>
            <Grip $h={12} />
          </PanelBar>
          <NavBar>
            {navItems.map(n => (
              <NavButton key={n.label} aria-label={n.label} $apart={n.apart}>
                <svg width={n.w} height="18" viewBox={`0 0 ${n.w} 18`} fill="none" stroke="#4a4a4a">{n.art}</svg>
                {n.menu && <Caret />}
              </NavButton>
            ))}
          </NavBar>
        </Bottom>
      </Workspace>

      <Timeline>
        <Playback>
          {playback.map(([name, d]) => (
            <IconSlot key={name} $w={25} aria-label={name}><svg width="14" height="14" viewBox="0 0 14 14" fill="#444" stroke="#444" strokeWidth="1.500"><path d={d} /></svg></IconSlot>
          ))}
        </Playback>
        <History>
          <Features>
            {features.map((f, i) => (
              <Feature key={i}>{featureArt[f]}<Track $edge={i === 0 ? 'first' : i === features.length - 1 ? 'last' : undefined} /></Feature>
            ))}
          </Features>
          <Marker><svg width="12" height="32" viewBox="0 0 12 32"><path d="M0 0h12v4L7 9v23H5V9L0 4z" fill="#555" /></svg></Marker>
        </History>
        <IconSlot $w={18} aria-label="Timeline settings"><Gear /></IconSlot>
      </Timeline>

      <TaskBar>
        <Start aria-label="Start"><svg width="16" height="16" viewBox="0 0 16 16" fill="#fff"><path d="M0 2l7-1v6.500H0zM8 1l8-1v7.500H8zM0 8.500h7V15l-7-1zM8 8.500h8V16l-8-1z" /></svg></Start>
        <Search>
          <svg width="18" height="18" viewBox="0 0 18 18" fill="none" stroke="#333" strokeWidth="1.500"><circle cx="11" cy="7" r="5.500" /><path d="M7 11l-6 6" /></svg>
          <SearchInput aria-label="Search" placeholder="Type here to search" />
        </Search>
        {tasks.map(t => <TaskButton key={t.name} aria-label={t.name} $tone={t.tone} $line={t.line} $wide={t.wide}>{t.art}</TaskButton>)}
        <Tray>
          <TrayButton aria-label="Show hidden icons"><svg width="12" height="7" viewBox="0 0 12 7" fill="none" stroke="#fff" strokeWidth="1.500"><path d="M1 6l5-5 5 5" /></svg></TrayButton>
          <TrayButton aria-label="Dropbox"><svg width="16" height="14" viewBox="0 0 16 14" fill="#fff"><path d="M4 0l4 2.500L4 5 0 2.500zM12 0l4 2.500L12 5 8 2.500zM4 5l4 2.500L4 10 0 7.500zM12 5l4 2.500L12 10 8 7.500zM8 9l4 2.500L8 14l-4-2.500z" /></svg></TrayButton>
          <TrayButton aria-label="Network"><svg width="17" height="15" viewBox="0 0 17 15" fill="none" stroke="#fff" strokeWidth="1.200"><path d="M5 2h11v8H4V7M10 10v4M6 14h8M1 1h4v5H1zM3 6v4" /></svg></TrayButton>
          <TrayButton aria-label="Volume"><svg width="17" height="14" viewBox="0 0 17 14" fill="none" stroke="#fff" strokeWidth="1.200"><path d="M1 5h2l4-4v12L3 9H1zM9 5c1 1 1 3 0 4M11 3c2 2 2 6 0 8M13 1c4 3 4 9 0 12" /></svg></TrayButton>
          <Language>ENG</Language>
          <Clock>{'11:33 PM\n7/8/2019'}</Clock>
          <TrayButton aria-label="3 notifications">
            <svg width="26" height="26" viewBox="0 0 26 26"><path d="M1 2h17v13H8l-4 4v-4H1z" fill="#fff" /><path d="M4 5h11M4 8h11M4 11h7" stroke="#182540" /><circle cx="17" cy="17" r="7.500" fill="#263247" stroke="#8d949f" /><text x="17" y="21" textAnchor="middle" fontFamily="Open Sans, sans-serif" fontSize="11" fill="#fff">3</text></svg>
          </TrayButton>
          <Peek />
        </Tray>
      </TaskBar>
    </Window>
  );
}
